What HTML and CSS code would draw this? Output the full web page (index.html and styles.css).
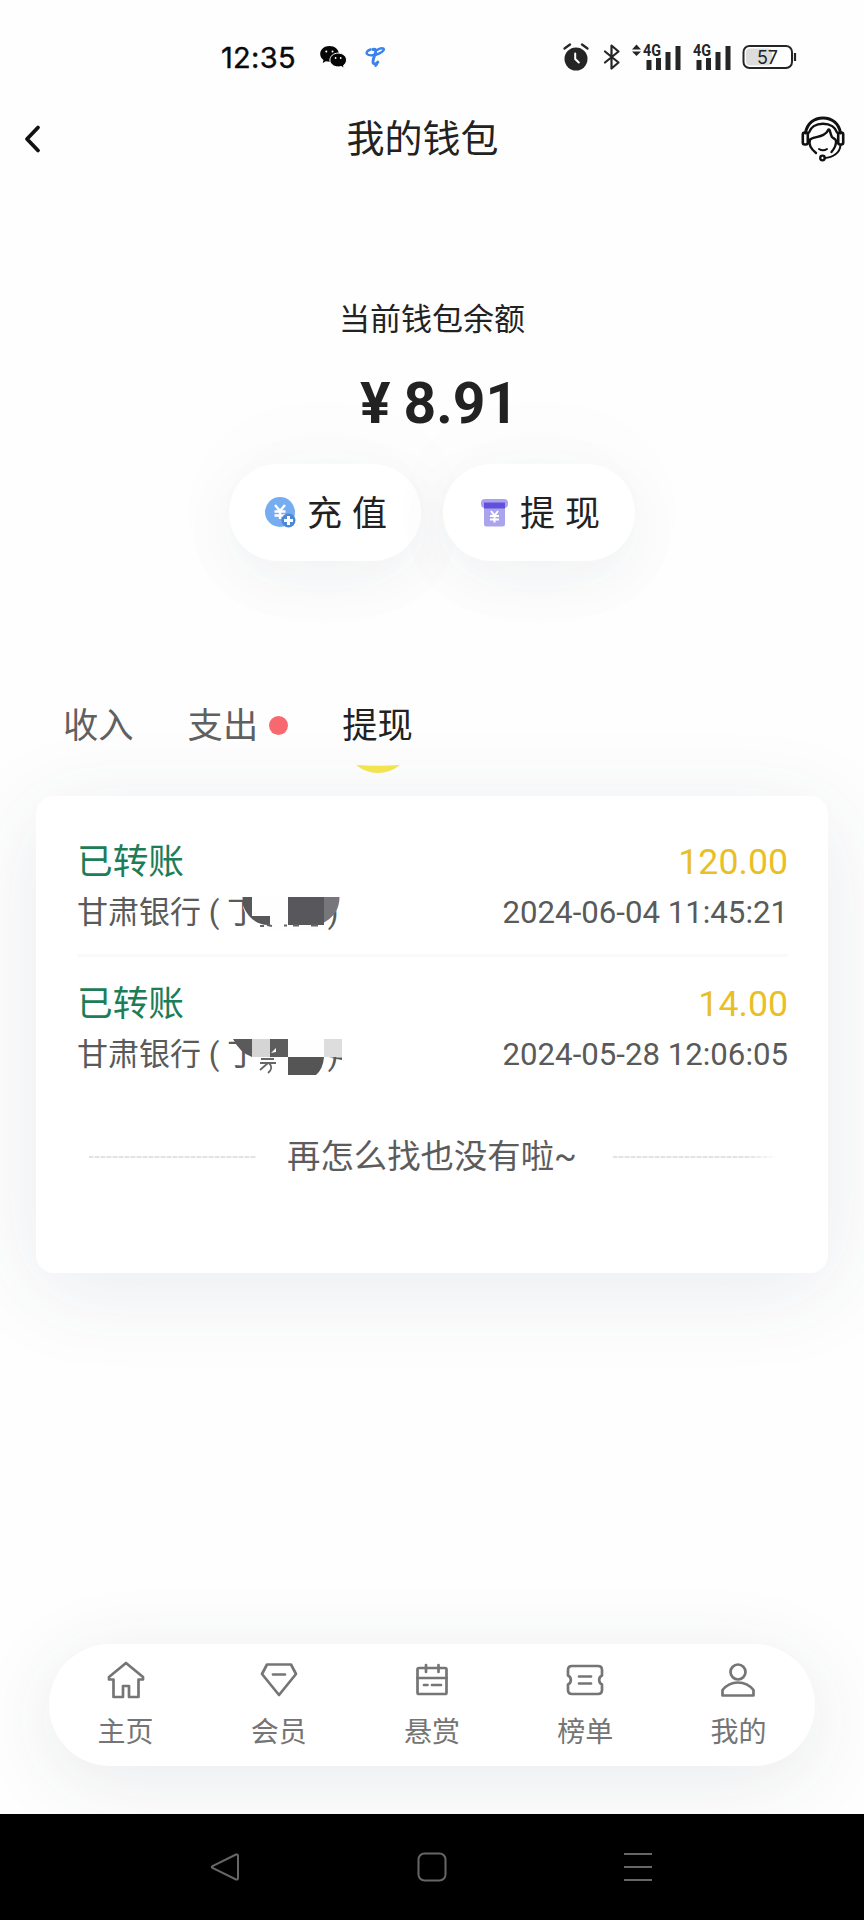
FILE: index.html
```html
<!DOCTYPE html>
<html lang="zh-CN">
<head>
<meta charset="utf-8">
<title>我的钱包</title>
<link rel="stylesheet" href="styles.css">
</head>
<body>
<div class="phone">
  <header class="status">
    <div class="status-left">
      <span class="clock">12:35</span>
      <svg class="wechat" width="27" height="23" viewBox="0 0 27 23">
        <path d="M9.500 0C4.200 0 .2 3.500.2 7.900c0 2.500 1.300 4.600 3.300 6l-.8 3 3.200-1.600c1.200.3 2.300.5 3.600.5 5.200 0 9.300-3.500 9.300-7.900S14.700 0 9.500 0z" fill="#050505"/>
        <path d="M18.200 7.100c-4.700 0-8.300 3.100-8.300 6.900s3.600 6.900 8.300 6.900c1 0 2-.2 2.900-.4l3.200 1.700-.8-2.800c1.900-1.300 3-3.200 3-5.400 0-3.800-3.600-6.900-8.300-6.900z" fill="#050505" stroke="#fff" stroke-width="1"/>
        <g fill="#fff"><circle cx="6.300" cy="5.500" r="1"/><circle cx="12.500" cy="5.500" r="1"/><circle cx="15.600" cy="12" r=".9"/><circle cx="20.700" cy="12" r=".9"/></g>
      </svg>
      <svg class="telecom" width="21" height="21" viewBox="0 0 21 21" fill="none" stroke="#3a83ec" stroke-linecap="round">
        <path d="M5.500 2.500C2.500 3.500 1 5.500 2 7c2 2.200 8 1.500 12.500-.7 4-2 5.500-4.300 3.500-4.800-1.500-.4-4 .3-5.500 1.300" stroke-width="2.400"/>
        <path d="M8 2.500c2.500-1 3 .5 2.500 3C9.800 9 7 13.500 8.300 16c1 1.700 3.200 1 4.500-.8" stroke-width="3"/>
        <path d="M10.500 19l1.500-1.500" stroke-width="2"/>
      </svg>
    </div>
    <div class="status-right">
      <svg width="26" height="28" viewBox="0 0 26 28">
        <circle cx="13" cy="16" r="11.500" fill="#252525"/>
        <path d="M1.500 5.500L7 1.500M24.500 5.500L19 1.500" stroke="#252525" stroke-width="2.200" stroke-linecap="round"/>
        <path d="M12.200 10.500v5.500l3.600 3.500" fill="none" stroke="#fff" stroke-width="2" stroke-linecap="round"/>
      </svg>
      <svg class="bt" width="18" height="28" viewBox="0 0 18 28">
        <path d="M2 8.500l13.500 11L8.500 25.500V2.500l7 6L2 19.500" fill="none" stroke="#252525" stroke-width="2.200" stroke-linejoin="round" stroke-linecap="round"/>
      </svg>
      <svg class="signal-a" width="50" height="32" viewBox="0 -4 50 32">
        <g fill="#252525"><path d="M0 6.500L4.500 1.500 9 6.500zM0 8.500h9L4.500 13z"/>
        <rect x="14.500" y="17" width="5" height="10"/><rect x="24" y="15" width="5" height="12"/><rect x="33.500" y="9" width="5" height="18"/><rect x="43.500" y="3" width="5" height="24"/></g>
        <text x="11" y="13" class="net" textLength="18" lengthAdjust="spacingAndGlyphs">4G</text>
      </svg>
      <svg class="signal-b" width="39" height="32" viewBox="0 -4 39 32">
        <g fill="#252525"><rect x="3.500" y="17" width="5" height="10"/><rect x="13" y="15" width="5" height="12"/><rect x="22.500" y="9" width="5" height="18"/><rect x="32.500" y="3" width="5" height="24"/></g>
        <text x="0" y="13" class="net" textLength="18" lengthAdjust="spacingAndGlyphs">4G</text>
      </svg>
      <svg class="battery" width="56" height="26" viewBox="0 0 56 26">
        <rect x="1.500" y="2" width="48.500" height="22" rx="6" fill="#fff" stroke="#252525" stroke-width="2"/>
        <rect x="4" y="4.500" width="26" height="17" rx="4" fill="#dcdcdc"/>
        <path d="M53 9v8" stroke="#252525" stroke-width="2.200"/>
        <text x="25.500" y="19.500" class="level">57</text>
      </svg>
    </div>
  </header>

  <nav class="titlebar">
    <svg class="back" width="20" height="30" viewBox="0 0 20 30"><path d="M16 3.500L5 15l11 11.500" fill="none" stroke="#111" stroke-width="3.800" stroke-linecap="round" stroke-linejoin="round"/></svg>
    <h1>我的钱包</h1>
    <svg class="service" width="44" height="46" viewBox="0 0 44 46" fill="none" stroke="#111" stroke-linecap="round" stroke-linejoin="round">
      <path d="M4.500 17C6 7.500 13 2 22 2s16 5.500 17.500 15" stroke-width="3"/>
      <path d="M8 16.500C9.500 11.500 14.500 7.800 22 7.800s12.500 3.700 14 8.700" stroke-width="2.400"/>
      <rect x="1.800" y="16.500" width="5" height="12" rx="2" stroke-width="2.600"/>
      <rect x="37.200" y="16.500" width="5" height="12" rx="2" stroke-width="2.600"/>
      <path d="M15 37C10 33 7.500 28 9 23.500c4-3.500 15-1.500 18.500-10 1.500-1 1.800 5 3.500 7.500 1.200 1.500 3 1.500 4 3.500.5 4-1.500 8-4.500 11.500" stroke-width="2.400"/>
      <path d="M18 33q4 2.700 8 0" stroke-width="2"/>
      <path d="M39.500 29C39 37 32 41.500 23.500 42" stroke-width="2"/>
      <circle cx="21.500" cy="42" r="2.300" stroke-width="2.300"/>
    </svg>
  </nav>

  <section class="balance">
    <div class="balance-label">当前钱包余额</div>
    <div class="amount"><span class="yen">¥</span>8.91</div>
    <div class="actions">
      <button class="action">
        <svg width="31" height="31" viewBox="0 0 31 31">
          <circle cx="15" cy="15" r="15" fill="#76adf1"/>
          <path d="M10 8l5 6 5-6M15 14v8M9.500 14.500h11M9.500 18.500h11" fill="none" stroke="#fff" stroke-width="2.400"/>
          <circle cx="23.500" cy="23.500" r="7" fill="#4c87d8"/>
          <path d="M23.500 19v9M19 23.500h9" stroke="#fff" stroke-width="3"/>
        </svg>
        <span>充 值</span>
      </button>
      <button class="action">
        <svg width="29" height="31" viewBox="0 0 29 31">
          <rect x="1" y="2" width="27" height="9" rx="4" fill="#aaa2ef"/>
          <path d="M4 9h21v18a2.500 2.500 0 0 1-2.500 2.500h-16A2.500 2.500 0 0 1 4 27z" fill="#aaa4ed"/>
          <path d="M4 5.500h21v6H4z" fill="#6250dd"/>
          <path d="M11 14l3.500 4.500L18 14M14.500 18v7.500M10 19h9M10 22.500h9" fill="none" stroke="#fff" stroke-width="2"/>
        </svg>
        <span>提 现</span>
      </button>
    </div>
  </section>

  <div class="tabs">
    <span class="tab">收入</span>
    <span class="tab">支出<i class="dot"></i></span>
    <span class="tab active">提现
      <svg class="smile" width="44" height="9" viewBox="0 0 44 9"><path d="M0 0Q22 1.500 44 0Q34 8 22 8T0 0z" fill="#f2e350"/></svg>
    </span>
  </div>

  <main class="card">
    <article class="record">
      <div class="line"><span class="state">已转账</span><span class="sum">120.00</span></div>
      <div class="line detail">
        <span class="bank">甘肃银行 ( 丁<span class="masked"></span> )
          <svg class="mosaic" width="102" height="40" viewBox="0 0 102 40">
            <path d="M17 0H95V34H30Q15 28 10 10V0z" fill="#fefefe"/>
            <path d="M9.500 0H19v19h18v9Q19 29 10 9z" fill="#58585a"/>
            <path d="M55 0h36v28H55z" fill="#58575c"/>
            <path d="M91 0h15.500q0 17-15.500 25.500z" fill="#77777b"/>
            <path d="M27 29h4M34 28l5 1M51 28.500h3M60 28.500h6M78 28.500h7" stroke="#666" stroke-width="2"/>
          </svg>
        </span>
        <time>2024-06-04 11:45:21</time>
      </div>
    </article>
    <article class="record">
      <div class="line"><span class="state">已转账</span><span class="sum">14.00</span></div>
      <div class="line detail">
        <span class="bank">甘肃银行 ( 丁<span class="masked"></span> )
          <svg class="mosaic" width="109" height="40" viewBox="0 0 109 40">
            <path d="M18 0h91v18H95L80 36H55V20H30Q18 18 18 0z" fill="#fefefe"/>
            <path d="M0 0h19v18Q7 14 0 0z" fill="#5a5a5a"/>
            <path d="M19 0h18v18H19z" fill="#d5d5d5"/>
            <path d="M37 0h18v18H37z" fill="#5d5d5d"/>
            <path d="M38 14l5-5v4z" fill="#fff"/>
            <path d="M55 18h36q-1 12-8 18H55z" fill="#555"/>
            <path d="M91 0h18v18H91z" fill="#ddd"/>
            <path d="M96 18.500h13v2.500z" fill="#555"/>
            <path d="M28 20h13M27 24h16M36 24q5 5-1 10M35 24l-8 7" fill="none" stroke="#666" stroke-width="1.800"/>
          </svg>
        </span>
        <time>2024-05-28 12:06:05</time>
      </div>
    </article>
    <div class="end"><i class="rule"></i><span>再怎么找也没有啦~</span><i class="rule fade"></i></div>
  </main>

  <nav class="dock">
    <a class="item">
      <svg width="38" height="38" viewBox="0 0 38 38"><path d="M19 2L2 16v2.500h4.500V36H16V25h6v11h9.500V18.500H36V16z"/></svg>
      <span>主页</span>
    </a>
    <a class="item">
      <svg width="38" height="38" viewBox="0 0 38 38"><path d="M7 3.500h24l5 9.500L19 34 2 13zM13 13.500h12"/></svg>
      <span>会员</span>
    </a>
    <a class="item">
      <svg width="38" height="38" viewBox="0 0 38 38"><rect x="4.500" y="7" width="29" height="26" rx="1.500"/><path d="M4.500 17h29M13 4v7M25.500 4v7M11 24h3.500M19 24h9"/></svg>
      <span>悬赏</span>
    </a>
    <a class="item">
      <svg width="38" height="38" viewBox="0 0 38 38"><path d="M6 5h26q4 0 4 4v5.500a5 5 0 0 0 0 9V29q0 4-4 4H6q-4 0-4-4v-5.500a5 5 0 0 0 0-9V9q0-4 4-4zM13 15.500h12M13 22.500h12"/></svg>
      <span>榜单</span>
    </a>
    <a class="item">
      <svg width="38" height="38" viewBox="0 0 38 38"><circle cx="19" cy="11" r="7.500"/><path d="M3.500 34.500V29C8 23.500 13 21.500 19 21.500s11 2 15.500 7.500v5.500z"/></svg>
      <span>我的</span>
    </a>
  </nav>

  <footer class="system">
    <svg width="30" height="30" viewBox="0 0 30 30"><path d="M26 2.500L2.500 14q-1.500 1 0 2L26 27.500q2 .5 2-1.500V4q0-2-2-1.500z"/></svg>
    <svg width="30" height="30" viewBox="0 0 30 30"><rect x="1.500" y="1.500" width="27" height="27" rx="6"/></svg>
    <svg width="30" height="30" viewBox="0 0 30 30"><path d="M1 2h28M1 15h28M1 28h28"/></svg>
  </footer>
</div>
</body>
</html>
```

FILE: styles.css
```css
* { box-sizing: border-box; }
body { margin: 0; background: #fefefe; font-family: Roboto, "Noto Sans CJK SC", sans-serif; color: #222; }
svg { display: block; flex: none; }
.phone { width: 864px; height: 1920px; display: flex; flex-direction: column; overflow: hidden; }

.status { height: 100px; display: flex; justify-content: space-between; padding: 14px 66px 0 220px; flex: none; }
.status-left, .status-right { display: flex; align-items: center; height: 86px; }
.clock { font: 400 29px/40px Inter, sans-serif; color: #0a0a0a; width: 100px; padding: 1px 0 0 1px; letter-spacing: .3px; -webkit-text-stroke: .4px #0a0a0a; }
.telecom { margin-left: 18px; }
.bt { margin-left: 14px; }
.signal-a { margin: -4px 0 0 11px; }
.signal-b { margin: -4px 0 0 11px; }
.battery { margin-left: 10px; }
.net { font: 700 16.500px Roboto, sans-serif; fill: #252525; }
.level { font: 400 18px Inter, sans-serif; fill: #222; text-anchor: middle; }

.titlebar { height: 78px; padding: 0 19px 0 22px; display: grid; grid-template-columns: 44px 1fr 44px; align-items: center; flex: none; }
.titlebar h1 { margin: 0; padding-right: 22px; font-size: 38px; line-height: 56px; font-weight: 400; text-align: center; color: #222; }

.balance { height: 500px; padding-top: 119px; display: flex; flex-direction: column; align-items: center; flex: none; }
.balance-label { font-size: 31px; line-height: 46px; }
.amount { font-size: 57px; line-height: 66px; font-weight: 700; margin-top: 28px; padding-left: 14px; display: flex; }
.yen { margin-right: 13px; }
.actions { display: flex; gap: 22px; margin-top: 27px; }
.action { width: 192px; height: 97px; border: 0; border-radius: 49px; background: #fff; box-shadow: 0 16px 60px rgba(40, 60, 90, .05), 0 0 120px rgba(40, 80, 70, .03); display: flex; align-items: center; justify-content: center; gap: 11px; font: 400 35px/50px Roboto, "Noto Sans CJK SC", sans-serif; color: #222; padding: 0 0 0 2px; }
.action span { padding-top: 4px; word-spacing: 1.500px; }

.tabs { display: flex; gap: 54px; padding: 23px 64px 0 63px; height: 118px; flex: none; }
.tab { position: relative; font-size: 35.300px; line-height: 50px; height: 50px; color: #606060; display: flex; align-items: center; }
.tab.active { color: #222; }
.dot { width: 19px; height: 19px; border-radius: 50%; background: #f8696f; margin: -2px 0 0 11px; }
.smile { position: absolute; left: 14px; top: 64px; }

.card { margin: 0 36px; height: 477px; border-radius: 18px; background: #fff; box-shadow: 0 16px 90px rgba(50, 70, 100, .1); padding: 41px 40px 0 41px; flex: none; }
.record { height: 142px; }
.record:first-child { background: linear-gradient(#fafafa, #fafafa) 0 117px / 100% 3px no-repeat; }
.line { display: flex; justify-content: space-between; height: 50px; line-height: 50px; font-size: 35.700px; }
.state { color: #1c7d58; }
.sum { color: #e9bf28; }
.detail { font-size: 31px; color: #5a5a5a; padding-top: 1px; }
.detail time { font-size: 31.200px; }
.bank { position: relative; white-space: nowrap; }
.masked { display: inline-block; width: 62px; }
.mosaic { position: absolute; left: 156px; top: 9px; overflow: visible; }
.end { display: flex; align-items: center; margin-top: 10px; padding: 0 8px 0 12px; font-size: 33.400px; line-height: 50px; color: #5c5c5c; white-space: nowrap; }
.end span { margin: 0 36px 0 31px; padding-top: 1px; }
.rule { flex: 0 0 167px; height: 2px; background: repeating-linear-gradient(90deg, #e2e2e2 0 4px, #f3f3f3 4px 6px); }
.fade { -webkit-mask-image: linear-gradient(90deg, #000 80%, transparent); mask-image: linear-gradient(90deg, #000 80%, transparent); }

.dock { margin: 371px 49px 0; height: 122px; border-radius: 61px; background: #fff; box-shadow: 0 14px 80px rgba(50, 60, 80, .1); display: flex; flex: none; }
.item { flex: 1; display: flex; flex-direction: column; align-items: center; padding-top: 17px; font-size: 28px; line-height: 40px; color: #757575; }
.item svg { fill: none; stroke: #757575; stroke-width: 2.700; stroke-linejoin: round; stroke-linecap: round; margin-bottom: 14px; }

.system { margin-top: auto; height: 106px; background: #000; display: flex; justify-content: space-between; align-items: center; padding: 0 211px 0 210px; flex: none; }
.system svg { fill: none; stroke: #666; stroke-width: 2; }
```
